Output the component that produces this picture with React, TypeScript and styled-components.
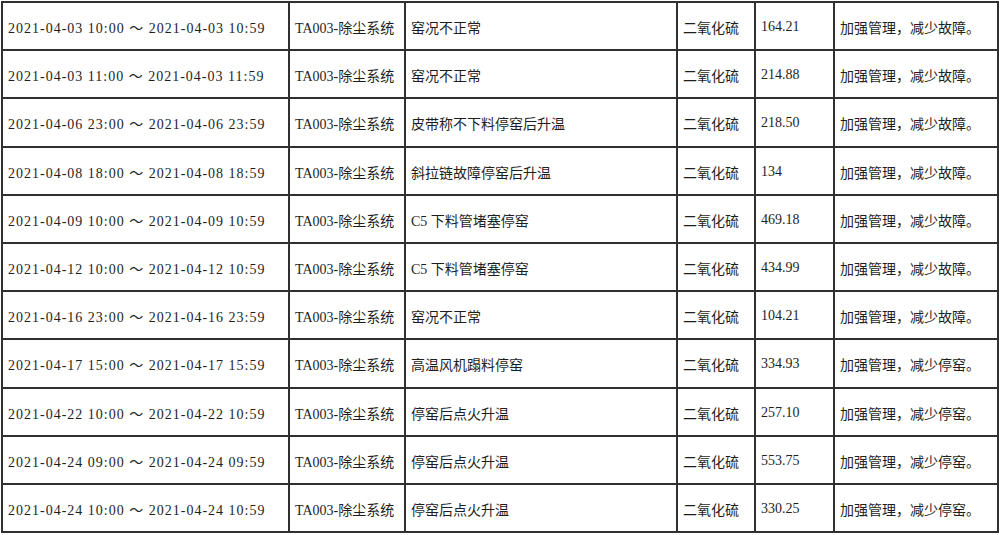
import React from 'react';
import styled, { createGlobalStyle } from 'styled-components';

const GlobalStyle = createGlobalStyle`
  html, body {
    margin: 0;
    padding: 0;
    background: #ffffff;
  }
  body {
    font-family: "Liberation Serif", "Noto Sans CJK SC", serif;
    color: #1e1e1e;
  }
`;

interface Record {
  start: string;
  end: string;
  source: string;
  reason: string;
  pollutant: string;
  value: string;
  measure: string;
}

const rows: Record[] = [
  { start: '2021-04-03 10:00', end: '2021-04-03 10:59', source: 'TA003-除尘系统', reason: '窑况不正常', pollutant: '二氧化硫', value: '164.21', measure: '加强管理，减少故障。' },
  { start: '2021-04-03 11:00', end: '2021-04-03 11:59', source: 'TA003-除尘系统', reason: '窑况不正常', pollutant: '二氧化硫', value: '214.88', measure: '加强管理，减少故障。' },
  { start: '2021-04-06 23:00', end: '2021-04-06 23:59', source: 'TA003-除尘系统', reason: '皮带称不下料停窑后升温', pollutant: '二氧化硫', value: '218.50', measure: '加强管理，减少故障。' },
  { start: '2021-04-08 18:00', end: '2021-04-08 18:59', source: 'TA003-除尘系统', reason: '斜拉链故障停窑后升温', pollutant: '二氧化硫', value: '134', measure: '加强管理，减少故障。' },
  { start: '2021-04-09 10:00', end: '2021-04-09 10:59', source: 'TA003-除尘系统', reason: 'C5 下料管堵塞停窑', pollutant: '二氧化硫', value: '469.18', measure: '加强管理，减少故障。' },
  { start: '2021-04-12 10:00', end: '2021-04-12 10:59', source: 'TA003-除尘系统', reason: 'C5 下料管堵塞停窑', pollutant: '二氧化硫', value: '434.99', measure: '加强管理，减少故障。' },
  { start: '2021-04-16 23:00', end: '2021-04-16 23:59', source: 'TA003-除尘系统', reason: '窑况不正常', pollutant: '二氧化硫', value: '104.21', measure: '加强管理，减少故障。' },
  { start: '2021-04-17 15:00', end: '2021-04-17 15:59', source: 'TA003-除尘系统', reason: '高温风机蹋料停窑', pollutant: '二氧化硫', value: '334.93', measure: '加强管理，减少停窑。' },
  { start: '2021-04-22 10:00', end: '2021-04-22 10:59', source: 'TA003-除尘系统', reason: '停窑后点火升温', pollutant: '二氧化硫', value: '257.10', measure: '加强管理，减少停窑。' },
  { start: '2021-04-24 09:00', end: '2021-04-24 09:59', source: 'TA003-除尘系统', reason: '停窑后点火升温', pollutant: '二氧化硫', value: '553.75', measure: '加强管理，减少停窑。' },
  { start: '2021-04-24 10:00', end: '2021-04-24 10:59', source: 'TA003-除尘系统', reason: '停窑后点火升温', pollutant: '二氧化硫', value: '330.25', measure: '加强管理，减少停窑。' },
];

export default function App() {
  return (
    <>
      <GlobalStyle />
      <Page>
        <Table>
          {rows.map((r, i) => (
            <React.Fragment key={i}>
              <Cell $spaced>
                {r.start} ～ {r.end}
              </Cell>
              <Cell>{r.source}</Cell>
              <Cell>{r.reason}</Cell>
              <Cell>{r.pollutant}</Cell>
              <Cell>{r.value}</Cell>
              <Cell>{r.measure}</Cell>
            </React.Fragment>
          ))}
        </Table>
      </Page>
    </>
  );
}

const Page = styled.div`
  padding: 1px 0 0 1px;
`;

const Table = styled.div`
  display: grid;
  grid-template-columns: 287px 116px 272px 78px 79px 164px;
  grid-auto-rows: 48.2px;
  width: max-content;
  border-top: 2px solid #303030;
  border-left: 2px solid #303030;
`;

const Cell = styled.div<{ $spaced?: boolean }>`
  box-sizing: border-box;
  display: flex;
  align-items: center;
  padding: 2px 0 0 5px;
  border-right: 2px solid #303030;
  border-bottom: 2px solid #303030;
  font-size: 14px;
  white-space: nowrap;
  overflow: hidden;
  letter-spacing: ${(p) => (p.$spaced ? '1px' : '0')};
`;
